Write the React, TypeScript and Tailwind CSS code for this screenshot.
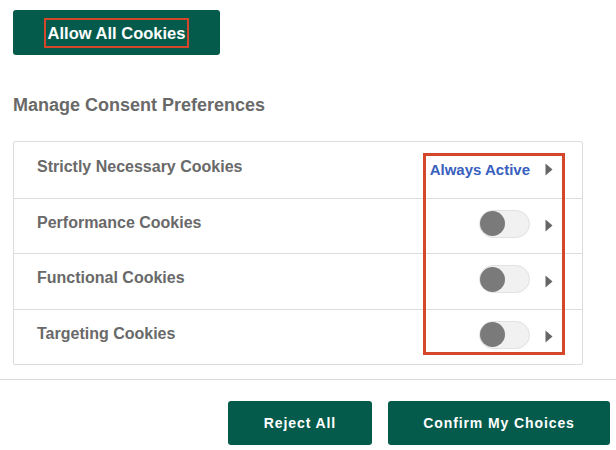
import React from "react";

const rows = [
  { label: "Strictly Necessary Cookies", active: true },
  { label: "Performance Cookies", active: false },
  { label: "Functional Cookies", active: false },
  { label: "Targeting Cookies", active: false },
];

function Arrow() {
  return (
    <svg width="8" height="13" viewBox="0 0 8 13" className="shrink-0">
      <path d="M0.5 0.5 L7.5 6.5 L0.5 12.5 Z" fill="#666666" />
    </svg>
  );
}

function Toggle() {
  return (
    <div className="flex h-[28px] w-[51px] items-center rounded-full border border-[#e2e2e2] bg-[#f1f1f1]">
      <div className="h-[25px] w-[25px] rounded-full bg-[#7a7a7a]" />
    </div>
  );
}

export default function App() {
  return (
    <div className="h-[450px] w-[616px] overflow-hidden bg-white font-['Liberation_Sans',Arial,sans-serif]">
      <div className="px-[13px] pt-[10px]">
        <button className="flex h-[45px] w-[207px] items-center justify-center rounded-[3px] bg-[#045b4c]">
          <span className="border-[2.5px] border-[#d4472a] px-[2px] py-[2px] text-[16.5px] font-bold leading-[22px] text-white">
            Allow All Cookies
          </span>
        </button>
        <h2 className="mt-[39px] text-[18px] font-bold leading-[22px] text-[#696969]">
          Manage Consent Preferences
        </h2>
        <div className="relative mt-[25px] w-[570px] rounded-[2px] border border-[#dcdcdc]">
          {rows.map((r, i) => (
            <div
              key={r.label}
              className={`flex h-[55.5px] items-center pl-[23px] pr-[29px] ${
                i > 0 ? "border-t border-[#dcdcdc]" : ""
              }`}
            >
              <span className="flex-1 -translate-y-[3px] text-[16px] font-bold text-[#696969]">{r.label}</span>
              {r.active ? (
                <span className="mr-[15px] text-[15px] font-bold text-[#3860be]">Always Active</span>
              ) : (
                <div className="mr-[15px] -translate-y-[2px]">
                  <Toggle />
                </div>
              )}
              <Arrow />
            </div>
          ))}
          <div className="pointer-events-none absolute left-[409px] top-[11px] h-[202px] w-[142px] border-[3px] border-[#d4472a]" />
        </div>
      </div>
      <div className="mt-[14px] h-px w-full bg-[#dcdcdc]" />
      <div className="mt-[21px] flex justify-end gap-[16px] pr-[6px]">
        <button className="h-[44px] w-[144px] rounded-[3px] bg-[#045b4c] text-[14px] font-bold tracking-[0.9px] text-white">
          Reject All
        </button>
        <button className="h-[44px] w-[222px] rounded-[3px] bg-[#045b4c] text-[14px] font-bold tracking-[0.9px] text-white">
          Confirm My Choices
        </button>
      </div>
    </div>
  );
}
